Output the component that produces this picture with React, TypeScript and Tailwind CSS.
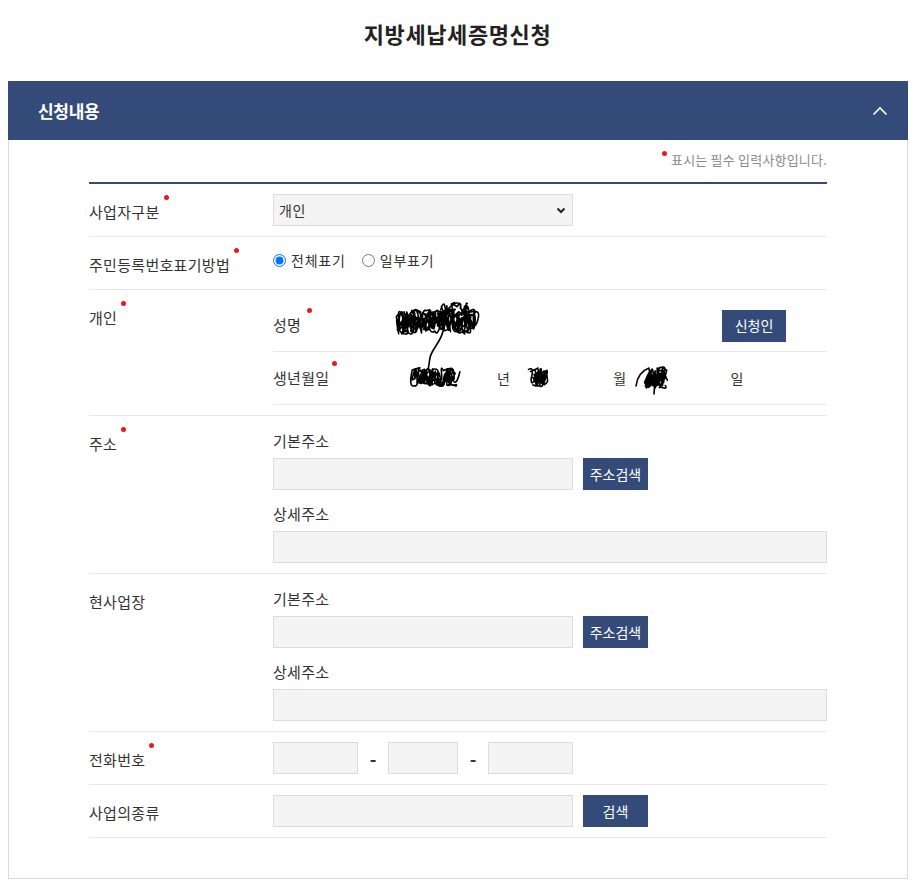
import React from "react";

function scribble(seed: number, x: number, y: number, w: number, h: number, sweeps: number, steps: number) {
  let s = seed;
  const rnd = () => {
    s = (s * 9301 + 49297) % 233280;
    return s / 233280;
  };
  let d = `M${(x + rnd() * 4).toFixed(1)} ${(y + h / 2).toFixed(1)}`;
  for (let k = 0; k < sweeps; k++) {
    for (let i = 1; i <= steps; i++) {
      const t = k % 2 === 0 ? i / steps : 1 - i / steps;
      const ex = x + t * w + (rnd() - 0.5) * 6;
      const ey = y + rnd() * h;
      const cx = ex + (rnd() - 0.5) * 14;
      const cy = y + (rnd() < 0.5 ? -2 : h + 2);
      d += ` Q${cx.toFixed(1)} ${cy.toFixed(1)} ${ex.toFixed(1)} ${ey.toFixed(1)}`;
    }
  }
  return d;
}

const nameA = scribble(7, 4, 10, 78, 24, 6, 22);
const nameB = scribble(31, 46, 3, 30, 13, 3, 6);
const yearA = scribble(13, 20, 68, 44, 18, 5, 12);
const monthA = scribble(57, 138, 68, 16, 19, 4, 6);
const dayA = scribble(91, 252, 67, 20, 21, 5, 8);

function Dot({ right = "-right-[9px]" }: { right?: string }) {
  return <span className={`absolute ${right} -top-[6px] h-[5px] w-[5px] rounded-full bg-[#f0141e]`} />;
}

function Label({ text, req = false }: { text: string; req?: boolean }) {
  return (
    <div className="w-[184px] shrink-0 pt-[17px] pb-[13px] text-[15px] leading-[22px] tracking-[0.3px] text-[#333]">
      <span className="relative inline-block">
        {text}
        {req && <Dot />}
      </span>
    </div>
  );
}

function Btn({ text, w = "w-[65px]" }: { text: string; w?: string }) {
  return (
    <button className={`h-[32px] ${w} bg-[#344b79] text-[14px] tracking-[0px] text-white`}>{text}</button>
  );
}

function Input({ w }: { w: string }) {
  return <input className={`h-[32px] ${w} border border-[#dcdcdc] bg-[#f4f4f4] outline-none`} />;
}

function AddressBlock() {
  return (
    <div className="flex flex-1 flex-col pt-[14px] pb-[10px]">
      <div className="text-[15px] leading-[22px] tracking-[0.3px] text-[#333]">기본주소</div>
      <div className="mt-[6px] flex gap-[10px]">
        <Input w="w-[300px]" />
        <Btn text="주소검색" />
      </div>
      <div className="mt-[13px] text-[15px] leading-[22px] tracking-[0.3px] text-[#333]">상세주소</div>
      <div className="mt-[6px] flex">
        <Input w="w-full" />
      </div>
    </div>
  );
}

export default function App() {
  return (
    <div
      className="min-h-[888px] bg-white text-[#333]"
      style={{ fontFamily: '"Noto Sans CJK KR", "Noto Sans", sans-serif' }}
    >
      <h1 className="h-[81px] pt-[20px] text-center text-[22px] font-bold leading-[26px] tracking-[0.6px] text-[#222]">
        지방세납세증명신청
      </h1>
      <div className="ml-[8px] w-[900px]">
        <div className="flex h-[59px] items-center justify-between bg-[#344b79] pl-[30px] pr-[20px]">
          <span className="text-[17px] font-bold tracking-[-0.3px] text-white">신청내용</span>
          <svg width="16" height="10" viewBox="0 0 16 10" fill="none">
            <polyline points="1.5,8.5 8,2 14.5,8.5" stroke="white" strokeWidth="1.6" />
          </svg>
        </div>
        <div className="border border-t-0 border-[#d9d9d9] px-[80px] pt-[10px] pb-[40px]">
          <div className="mb-[12px] flex justify-end">
            <span className="relative text-[13px] leading-[20px] tracking-[0.2px] text-[#8a8a8a]">
              <span className="absolute -left-[9px] top-[1px] h-[5px] w-[5px] rounded-full bg-[#f0141e]" />
              표시는 필수 입력사항입니다.
            </span>
          </div>
          <div className="border-t-2 border-[#344b79]">
            {/* 사업자구분 */}
            <div className="flex border-b border-[#e8e8e8]">
              <Label text="사업자구분" req />
              <div className="flex items-center">
                <div className="relative">
                  <select
                    defaultValue="개인"
                    className="h-[32px] w-[300px] appearance-none border border-[#dcdcdc] bg-[#f4f4f4] pl-[5px] text-[14px] tracking-[0.5px] text-[#333] outline-none"
                  >
                    <option>개인</option>
                    <option>법인</option>
                  </select>
                  <svg
                    className="pointer-events-none absolute right-[7px] top-[13px]"
                    width="10"
                    height="7"
                    viewBox="0 0 10 7"
                    fill="none"
                  >
                    <polyline points="1.5,1.5 5,5 8.5,1.5" stroke="#222" strokeWidth="2" />
                  </svg>
                </div>
              </div>
            </div>
            {/* 주민등록번호표기방법 */}
            <div className="flex border-b border-[#e8e8e8]">
              <Label text="주민등록번호표기방법" req />
              <div className="flex items-start gap-[16px] pt-[14px] text-[14px] leading-[18px] tracking-[0.8px]">
                <label className="flex items-center gap-[5px]">
                  <input type="radio" name="rrn" defaultChecked className="m-0 h-[13px] w-[13px]" />
                  <span>전체표기</span>
                </label>
                <label className="flex items-center gap-[5px]">
                  <input type="radio" name="rrn" className="m-0 h-[13px] w-[13px]" />
                  <span>일부표기</span>
                </label>
              </div>
            </div>
            {/* 개인 */}
            <div className="flex border-b border-[#e8e8e8]">
              <Label text="개인" req />
              <div className="flex-1 py-[10px]">
                <div className="relative">
                  <div className="flex h-[52px] items-center border-b border-[#e8e8e8] text-[15px] tracking-[0.3px]">
                    <span className="w-[124px] shrink-0">
                      <span className="relative inline-block">
                        성명
                        <Dot right="-right-[11px]" />
                      </span>
                    </span>
                    <span className="flex-1" />
                    <div className="mr-[41px]">
                      <Btn text="신청인" w="w-[64px]" />
                    </div>
                  </div>
                  <div className="flex h-[53px] items-center border-b border-[#e8e8e8] text-[15px] tracking-[0.3px]">
                    <span className="w-[124px] shrink-0">
                      <span className="relative inline-block">
                        생년월일
                        <Dot right="-right-[8px]" />
                      </span>
                    </span>
                    <span className="w-[100px] shrink-0" />
                    <span className="text-[14px]">년</span>
                    <span className="w-[103px] shrink-0" />
                    <span className="text-[14px]">월</span>
                    <span className="w-[104px] shrink-0" />
                    <span className="text-[14px]">일</span>
                  </div>
                  <svg
                    className="pointer-events-none absolute left-[120px] top-0"
                    width="290"
                    height="100"
                    viewBox="0 0 290 100"
                    fill="none"
                  >
                    <g stroke="#000" strokeWidth="1.6" strokeLinecap="round" strokeLinejoin="round">
                      <path d={nameA} />
                      <path d={nameB} />
                      <path d="M50 31 C48 42 38 50 37 58 C36 63 36 66 35 70" />
                      <path d={yearA} />
                      <path d={monthA} />
                      <path d="M243 86 C244 78 248 71 256 68" />
                      <path d={dayA} />
                      <path d="M262 80 L261 94" />
                    </g>
                  </svg>
                </div>
              </div>
            </div>
            {/* 주소 */}
            <div className="flex border-b border-[#e8e8e8]">
              <Label text="주소" req />
              <AddressBlock />
            </div>
            {/* 현사업장 */}
            <div className="flex border-b border-[#e8e8e8]">
              <Label text="현사업장" />
              <AddressBlock />
            </div>
            {/* 전화번호 */}
            <div className="flex border-b border-[#e8e8e8]">
              <Label text="전화번호" req />
              <div className="flex items-center">
                <Input w="w-[85px]" />
                <span className="w-[30px] text-center text-[18px] font-bold">-</span>
                <Input w="w-[70px]" />
                <span className="w-[30px] text-center text-[18px] font-bold">-</span>
                <Input w="w-[85px]" />
              </div>
            </div>
            {/* 사업의종류 */}
            <div className="flex border-b border-[#e8e8e8]">
              <Label text="사업의종류" />
              <div className="flex items-center gap-[10px]">
                <Input w="w-[300px]" />
                <Btn text="검색" />
              </div>
            </div>
          </div>
        </div>
      </div>
    </div>
  );
}
